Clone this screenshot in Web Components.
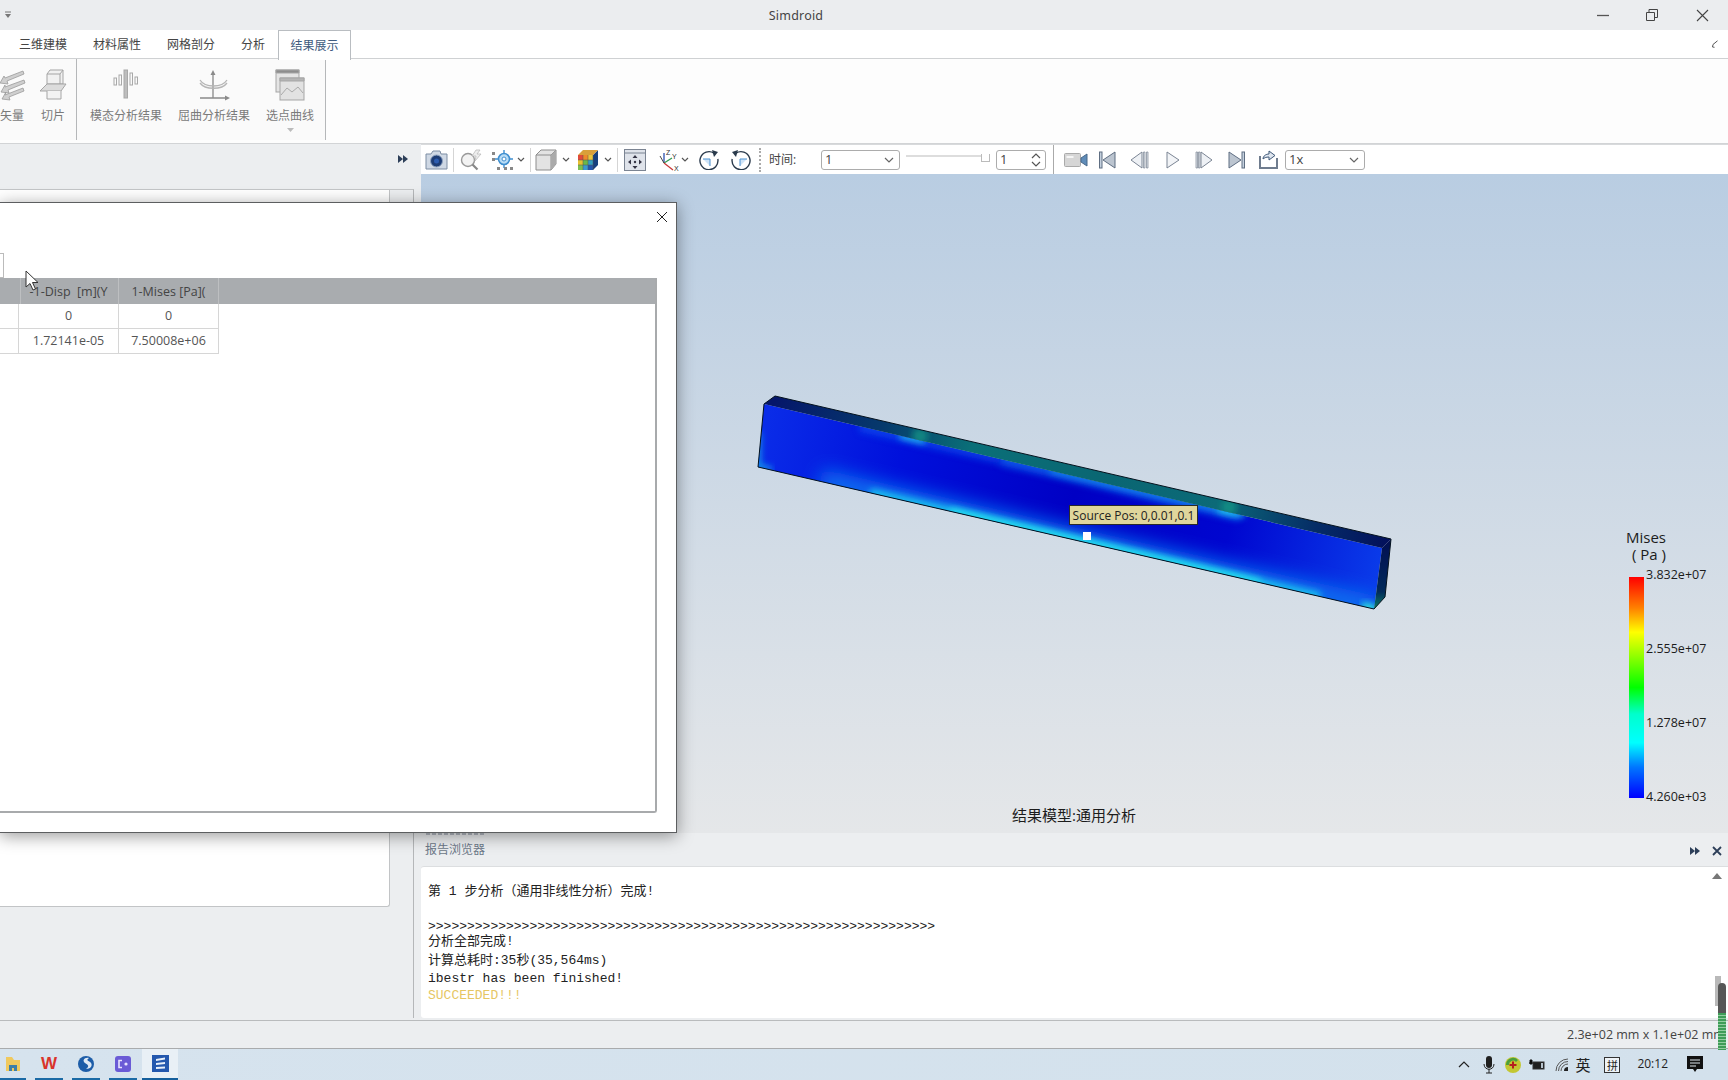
<!DOCTYPE html>
<html lang="zh">
<head>
<meta charset="utf-8">
<title>Simdroid</title>
<style>
  html, body { margin: 0; height: 100%; overflow: hidden; background: #eceef0; }
  body { font: 12px/1.4 "Open Sans", "Noto Sans CJK SC", sans-serif; }
</style>
</head>
<body>
<sim-app></sim-app>

<script>
const FONT = `"Open Sans", "Noto Sans CJK SC", sans-serif`;
const CHEV = `<svg width="8" height="6" viewBox="0 0 8 6"><path d="M1 1l3 3 3-3" fill="none" stroke="#555" stroke-width="1.2"/></svg>`;
const FFWD = `<svg width="12" height="10" viewBox="0 0 12 10"><path d="M1 1l5 4-5 4zM6 1l5 4-5 4z" fill="#2c3e58"/></svg>`;

// 主布局
class SimApp extends HTMLElement {
  constructor() {
    super();
    this.attachShadow({ mode: 'open' });
    this.shadowRoot.innerHTML = `
      <style>
        :host { display: flex; flex-direction: column; width: 1728px; height: 1080px; position: relative; overflow: hidden; font-family: ${FONT}; }
        .work { display: flex; height: 876px; }
        .right { display: flex; flex-direction: column; width: 1307px; }
        .cursor { position: absolute; left: 25px; top: 270px; }
        .meter { position: absolute; left: 1718px; top: 983px; width: 8px; height: 67px; border-radius: 4px 4px 0 0; background: linear-gradient(#565656 0 30px, transparent 30px), repeating-linear-gradient(#3f9d58 0 2px, #93cda0 2px 3px); }
      </style>
      <sim-titlebar></sim-titlebar>
      <sim-tabs></sim-tabs>
      <sim-ribbon></sim-ribbon>
      <div class="work">
        <sim-sidepanel></sim-sidepanel>
        <div class="right">
          <sim-toolbar></sim-toolbar>
          <sim-viewport></sim-viewport>
          <sim-report></sim-report>
        </div>
      </div>
      <sim-statusbar></sim-statusbar>
      <sim-taskbar></sim-taskbar>
      <sim-dialog></sim-dialog>
      <div class="meter"></div>
      <svg class="cursor" width="14" height="22" viewBox="0 0 14 22"><path d="M1 1v16l4-3.5 3 6.5 2.5-1-3-6.5h5.5z" fill="#fff" stroke="#333" stroke-width="1"/></svg>
    `;
  }
}

// 标题栏
class SimTitlebar extends HTMLElement {
  constructor() {
    super();
    this.attachShadow({ mode: 'open' });
    this.shadowRoot.innerHTML = `
      <style>
        :host { display: flex; align-items: center; height: 30px; background: #ebedef; color: #444; font-size: 13px; }
        .menu { width: 16px; padding-left: 4px; display: flex; }
        .title { flex: 1; text-align: center; margin-right: 11px; padding-top: 1px; font-family: "Noto Sans", sans-serif; font-size: 12.5px; letter-spacing: .2px; }
        .btns { display: flex; width: 140px; padding-right: 5px; align-items: center; }
      </style>
      <div class="menu"><svg width="8" height="8" viewBox="0 0 8 8"><path d="M1 1h6" stroke="#777"/><path d="M1 3l3 4 3-4z" fill="#777"/></svg></div>
      <div class="title">Simdroid</div>
      <div class="btns">
        <svg style="margin-left:14px" width="12" height="3" viewBox="0 0 12 3"><path d="M0 1.5h12" stroke="#555" stroke-width="1.3"/></svg>
        <svg style="margin-left:37px" width="12" height="12" viewBox="0 0 12 12"><path d="M.5 3.5h8v8h-8zM3 3.5V.5h8.5v8H8.5" fill="none" stroke="#444"/></svg>
        <svg style="margin-left:38px" width="13" height="13" viewBox="0 0 13 13"><path d="M1 1l11 11M12 1L1 12" stroke="#444" stroke-width="1.1"/></svg>
      </div>
    `;
  }
}

// 选项卡
class SimTabs extends HTMLElement {
  constructor() {
    super();
    this.attachShadow({ mode: 'open' });
    this.shadowRoot.innerHTML = `
      <style>
        :host { display: flex; height: 28px; background: #fff; border-bottom: 1px solid #cfd1d3; color: #444; font-size: 12px; position: relative; }
        .tab { display: flex; align-items: center; justify-content: center; padding-top: 2px; }
        .on { margin-left: 13px; width: 71px; height: 27px; border: 1px solid #b9bdc1; border-bottom: 0; background: #fff; color: #3f5c80; box-sizing: content-box; }
        .edit { margin-left: auto; margin-right: 9px; align-self: center; }
      </style>
      <div class="tab" style="margin-left:19px">三维建模</div>
      <div class="tab" style="margin-left:26px">材料属性</div>
      <div class="tab" style="margin-left:26px">网格剖分</div>
      <div class="tab" style="margin-left:26px">分析</div>
      <div class="tab on">结果展示</div>
      <svg class="edit" width="8" height="8" viewBox="0 0 8 8"><path d="M6.5 .8L2 4.5 1.5 7l2 .3" fill="none" stroke="#555"/></svg>
    `;
  }
}

// 功能区按钮
class RibbonBtn extends HTMLElement {
  constructor() {
    super();
    this.attachShadow({ mode: 'open' });
    this.shadowRoot.innerHTML = `
      <style>
        :host { display: flex; flex-direction: column; align-items: center; flex: none; color: #7a7a7a; font-size: 12px; }
        .icon { height: 36px; margin-top: 10px; display: flex; justify-content: center; }
        .label { margin-top: 2px; line-height: 18px; white-space: nowrap; }
        .more { height: 10px; display: flex; justify-content: center; margin-top: 3px; }
      </style>
      <div class="icon"><slot></slot></div>
      <div class="label"></div>
      <div class="more"></div>
    `;
  }
  connectedCallback() {
    this.shadowRoot.querySelector('.label').textContent = this.getAttribute('label');
    if (this.hasAttribute('more')) {
      this.shadowRoot.querySelector('.more').innerHTML = `<svg width="7" height="4" viewBox="0 0 7 4"><path d="M0 0h7L3.5 4z" fill="#bbb"/></svg>`;
    }
  }
}

// 功能区
class SimRibbon extends HTMLElement {
  constructor() {
    super();
    this.attachShadow({ mode: 'open' });
    this.shadowRoot.innerHTML = `
      <style>
        :host { display: flex; height: 84px; background: #fdfdfd; border-bottom: 1px solid #d2d4d6; box-sizing: content-box; }
        .group { display: flex; height: 81px; background: #fafafa; border-right: 1px solid #b5b7b9; overflow: hidden; box-sizing: border-box; }
        .g1 { width: 77px; justify-content: flex-end; padding-right: 8px; gap: 11px; }
        .g2 { width: 249px; padding-left: 13px; gap: 16px; }
      </style>
      <div class="group g1">
        <ribbon-btn label="矢量">
          <svg width="30" height="32" viewBox="0 0 30 32" fill="#cfcfcf" stroke="#9a9a9a" stroke-width=".8"><path d="M8 9l18-7 1 3L10 12l1 3-8-1 4-7zM8 18l19-7 1 3-17 7 1 3-8-1 4-7zM8 26l18-7 1 3-15 6 1 3-8-1 4-7z"/></svg>
        </ribbon-btn>
        <ribbon-btn label="切片">
          <svg width="30" height="32" viewBox="0 0 30 32" fill="none" stroke="#a5a5a5"><path d="M9 5l3-4h13v14H9z" fill="#f1f1f1"/><path d="M9 5h13l3-4M22 5v10" /><path d="M9 15L2 22h21l5-7z" fill="#dcdcdc"/><path d="M9 22v8h14v-8" fill="#f3f3f3"/></svg>
        </ribbon-btn>
      </div>
      <div class="group g2">
        <ribbon-btn label="模态分析结果">
          <svg width="30" height="32" viewBox="0 0 30 32" fill="none" stroke="#a8a8a8"><rect x="13" y="1" width="3.5" height="28" fill="#bdbdbd"/><rect x="8" y="6" width="2.5" height="10"/><rect x="19" y="4" width="2.5" height="12"/><rect x="3" y="9" width="2.5" height="7"/><rect x="24" y="8" width="2.5" height="7"/></svg>
        </ribbon-btn>
        <ribbon-btn label="屈曲分析结果">
          <svg width="32" height="32" viewBox="0 0 32 32" fill="none" stroke="#8a8a8a" stroke-width="1.3"><path d="M15 3v26M2 29h26"/><path d="M15 1l-2.5 5h5zM32 29l-5-2.5v5z" fill="#8a8a8a" stroke="none"/><path d="M2 11c5 8 22 8 27 0M2 14c5 7 22 7 27 0" stroke="#b5b5b5"/></svg>
        </ribbon-btn>
        <ribbon-btn label="选点曲线" more>
          <svg width="30" height="32" viewBox="0 0 30 32" fill="#e4e4e4" stroke="#a5a5a5"><rect x="1" y="1" width="23" height="22"/><path d="M1 1h23v3H1z" fill="#8d8d8d"/><rect x="5" y="9" width="24" height="22" fill="#e2e2e2"/><path d="M5 9h24v3H5z" fill="#b5b5b5"/><path d="M6 26l6-7 5 4 6-5 5 6" fill="none" stroke="#aaa"/></svg>
        </ribbon-btn>
      </div>
    `;
  }
}

// 左侧面板
class SimSidepanel extends HTMLElement {
  constructor() {
    super();
    this.attachShadow({ mode: 'open' });
    this.shadowRoot.innerHTML = `
      <style>
        :host { display: flex; flex-direction: column; width: 421px; flex: none; background: #eceef0; }
        .head { height: 30px; display: flex; align-items: center; justify-content: flex-end; padding-right: 12px; }
        .box { margin: 15px 7px 2px 0; flex: 1; border-top: 1px solid #c4c6c8; border-right: 1px solid #b5b7b9; }
        .inner { width: 389px; height: 716px; background: #fff; border: solid #c2c4c6; border-width: 0 1px 1px 0; border-radius: 0 0 3px 0; }
      </style>
      <div class="head">${FFWD}</div>
      <div class="box"><div class="inner"></div></div>
    `;
  }
}

// 工具栏下拉框
class TbSelect extends HTMLElement {
  constructor() {
    super();
    this.attachShadow({ mode: 'open' });
    this.shadowRoot.innerHTML = `
      <style>
        :host { display: flex; align-items: center; justify-content: space-between; height: 20px; box-sizing: border-box; border: 1px solid #acacac; border-radius: 3px; padding: 0 5px 0 3px; background: #fff; color: #444; font-size: 13px; }
      </style>
      <span><slot></slot></span>
      <svg width="10" height="6" viewBox="0 0 10 6"><path d="M1 1l4 4 4-4" fill="none" stroke="#666" stroke-width="1.2"/></svg>
    `;
  }
}

// 工具栏
class SimToolbar extends HTMLElement {
  constructor() {
    super();
    this.attachShadow({ mode: 'open' });
    this.shadowRoot.innerHTML = `
      <style>
        :host { display: flex; align-items: center; height: 30px; box-sizing: border-box; background: #fff; border-top: 1px solid #d8dadc; color: #444; font-size: 12px; }
        svg, .sep, tb-select, .spin, .slider, .lbl { flex: none; }
        .sep { width: 1px; height: 24px; background: #d5d5d5; }
        .sep.b { height: 29px; background: #aaa; }
        .dot { width: 0; height: 24px; border-left: 2px dotted #aaa; }
        .lbl { width: 30px; white-space: nowrap; padding-top: 2px; }
        .slider { width: 84px; height: 20px; position: relative; }
        .slider .line { position: absolute; left: 0; right: 5px; top: 5px; height: 2px; border: 1px solid #ddd; box-sizing: border-box; background: #f6f6f6; }
        .slider .thumb { position: absolute; right: 0; top: 4px; width: 9px; height: 8px; border: 1px solid #bbb; border-top: 0; background: #fff; box-sizing: border-box; }
        .spin { width: 50px; height: 20px; box-sizing: border-box; border: 1px solid #acacac; border-radius: 3px; display: flex; align-items: center; justify-content: space-between; padding: 0 4px 0 3px; font-size: 13px; }
        .spin svg { display: block; }
      </style>
      <svg style="margin-left:4px" width="23" height="20" viewBox="0 0 23 20"><path d="M1 4h5l2-3h7l1 3h6v15H1z" fill="#cfd8e4" stroke="#7d8da3"/><circle cx="11.5" cy="11" r="6" fill="#1d3c74" stroke="#8fa3bf"/><circle cx="11.5" cy="11" r="2.5" fill="#2c5cb0"/></svg>
      <div class="sep" style="margin-left:5px"></div>
      <svg style="margin-left:6px" width="22" height="22" viewBox="0 0 22 22"><circle cx="8" cy="11" r="6.5" fill="#f3f3f3" stroke="#999" stroke-width="1.4"/><path d="M12.5 15.5l5 5" stroke="#888" stroke-width="2.2"/><path d="M16 1l-4 6h4l-1 5 6-7h-4l3-4z" fill="#eee" stroke="#bbb" stroke-width=".8"/></svg>
      <svg style="margin-left:9px" width="24" height="22" viewBox="0 0 24 22"><circle cx="13" cy="10" r="5.5" fill="#b9dcf5" stroke="#3f8fd0" stroke-width="1.6"/><circle cx="13" cy="10" r="2" fill="#fff" stroke="#3f8fd0"/><path d="M13 1v4M13 15v4M4 10h4M18 10h4" stroke="#3f8fd0" stroke-width="1.4"/><g fill="#888"><rect x="1" y="3" width="3" height="3"/><rect x="1" y="9" width="3" height="3"/><rect x="6" y="18" width="3" height="3"/><rect x="13" y="18" width="3" height="3"/><rect x="19" y="18" width="3" height="3"/></g></svg>
      <span style="margin-left:2px;display:flex">${CHEV}</span>
      <div class="sep" style="margin-left:5px"></div>
      <svg style="margin-left:4px" width="22" height="22" viewBox="0 0 22 22"><path d="M1 6l5-5h15v14l-5 6H1z" fill="#e3e3e3" stroke="#8d8d8d"/><path d="M16 6h-15M16 6l5-5M16 6v15" fill="none" stroke="#8d8d8d"/><path d="M16 6l5-5v14l-5 6z" fill="#aaa"/></svg>
      <span style="margin-left:5px;display:flex">${CHEV}</span>
      <svg style="margin-left:7px" width="22" height="22" viewBox="0 0 22 22"><path d="M1 6h5v5H1z" fill="#e24a3a"/><path d="M6 6h5v5H6z" fill="#ee8a2a"/><path d="M11 6h5v5h-5z" fill="#e9c53a"/><path d="M1 11h5v5H1z" fill="#e8c030"/><path d="M6 11h5v5H6z" fill="#6ab84a"/><path d="M11 11h5v5h-5z" fill="#33a0c0"/><path d="M1 16h5v5H1z" fill="#7cc050"/><path d="M6 16h5v5H6z" fill="#3a9ad0"/><path d="M11 16h5v5h-5z" fill="#2255b0"/><path d="M16 6l5-5v15l-5 5z" fill="#16407e"/><path d="M1 6l5-5h15l-5 5z" fill="#d9a03a"/><path d="M6 6v15M11 6v15M1 11h15M1 16h15M16 6v15" stroke="#555" stroke-width=".5"/></svg>
      <span style="margin-left:5px;display:flex">${CHEV}</span>
      <div class="sep" style="margin-left:5px"></div>
      <svg style="margin-left:6px" width="22" height="22" viewBox="0 0 22 22"><rect x=".5" y=".5" width="21" height="21" fill="#dfe3ea" stroke="#7b8492"/><path d="M.5 4h21" stroke="#7b8492"/><path d="M11 6l-2.5 3h5zM11 20l-2.5-3h5zM4 13l3-2.5v5zM18 13l-3-2.5v5z" fill="#334"/><circle cx="11" cy="13" r="1.2" fill="#334"/></svg>
      <svg style="margin-left:11px" width="23" height="24" viewBox="0 0 23 24"><path d="M7 15V5" stroke="#2c50b0" stroke-width="1.3"/><path d="M7 15l8-5" stroke="#2f9a55" stroke-width="1.3"/><path d="M7 15l9 7" stroke="#c83a3a" stroke-width="1.3"/><path d="M7 15L3 8" stroke="#444"/><g font-family="Liberation Sans" font-size="7" fill="#333"><text x="9" y="7">Z</text><text x="15" y="11">Y</text><text x="17" y="23">X</text></g></svg>
      <span style="margin-left:1px;display:flex">${CHEV}</span>
      <svg style="margin-left:10px" width="20" height="20" viewBox="0 0 20 20"><path d="M15 3.2A9 9 0 1 0 18.8 9" fill="none" stroke="#2a3a4c" stroke-width="1.4"/><path d="M13 0l6 2-4 5z" fill="#2a3a4c"/><path d="M4 9h7v7" fill="#cfe4f8" stroke="#4a90d0"/></svg>
      <svg style="margin-left:12px" width="20" height="20" viewBox="0 0 20 20"><path d="M5 3.2A9 9 0 1 1 1.2 9" fill="none" stroke="#2a3a4c" stroke-width="1.4"/><path d="M7 0L1 2l4 5z" fill="#2a3a4c"/><path d="M16 9H9v7" fill="#cfe4f8" stroke="#4a90d0"/></svg>
      <div class="dot" style="margin-left:8px"></div>
      <div class="lbl" style="margin-left:8px">时间:</div>
      <tb-select style="margin-left:22px;width:79px">1</tb-select>
      <div class="slider" style="margin-left:6px"><div class="line"></div><div class="thumb"></div></div>
      <div class="spin" style="margin-left:6px"><span>1</span>
        <svg width="10" height="16" viewBox="0 0 10 16"><path d="M1 6l4-4 4 4M1 10l4 4 4-4" fill="none" stroke="#555" stroke-width="1.2"/></svg>
      </div>
      <div class="sep b" style="margin-left:7px"></div>
      <svg style="margin-left:10px" width="24" height="14" viewBox="0 0 24 14"><rect x=".5" y=".5" width="16" height="13" rx="1" fill="#d6d6d6" stroke="#aaa"/><rect x="2.5" y="3" width="7" height="2" fill="#f5f5f5"/><path d="M17 5l6-4v12l-6-4z" fill="#5f8cb8" stroke="#49698a"/></svg>
      <svg style="margin-left:11px" width="17" height="18" viewBox="0 0 17 18"><rect x=".5" y="1" width="2.5" height="16" fill="#c4d0de" stroke="#5f6e82"/><path d="M16 1v16L4 9z" fill="#bcc5d0" stroke="#5f6e82"/></svg>
      <svg style="margin-left:14px" width="19" height="18" viewBox="0 0 19 18"><path d="M12 1v16L1 9z" fill="#eef1f5" stroke="#7b8594"/><path d="M13.5 1h1.5v16h-1.5zM16.5 1H18v16h-1.5z" fill="#dde3ea" stroke="#7b8594" stroke-width=".7"/></svg>
      <svg style="margin-left:17px" width="14" height="18" viewBox="0 0 14 18"><path d="M1 1v16l12-8z" fill="#f2f4f7" stroke="#7b8594"/></svg>
      <svg style="margin-left:15px" width="18" height="18" viewBox="0 0 18 18"><path d="M6 1v16l11-8z" fill="#eef1f5" stroke="#7b8594"/><path d="M1 1h1.5v16H1zM3.5 1H5v16H3.5z" fill="#dde3ea" stroke="#7b8594" stroke-width=".7"/></svg>
      <svg style="margin-left:15px" width="17" height="18" viewBox="0 0 17 18"><path d="M1 1v16l12-8z" fill="#bcc5d0" stroke="#5f6e82"/><rect x="14" y="1" width="2.5" height="16" fill="#c4d0de" stroke="#5f6e82"/></svg>
      <svg style="margin-left:14px" width="19" height="19" viewBox="0 0 19 19"><path d="M1 6v12h17V8" fill="none" stroke="#6f7c8e" stroke-width="2"/><path d="M4 9c0-3 3-5 6-5V1l6 4.5L10 10V7c-3 0-5 1-6 2z" fill="#dfe6ef" stroke="#3f5878"/></svg>
      <tb-select style="margin-left:7px;width:80px">1x</tb-select>
    `;
  }
}

// 三维视图
class SimViewport extends HTMLElement {
  constructor() {
    super();
    this.attachShadow({ mode: 'open' });
    this.shadowRoot.innerHTML = `
      <style>
        :host { display: block; position: relative; height: 659px; background: linear-gradient(#b9cde2, #e5e7e9); overflow: hidden; color: #1c1c1c; }
        svg.model { position: absolute; left: 0; top: 0; }
        .tip { position: absolute; left: 648px; top: 331px; width: 129px; height: 20px; box-sizing: border-box; border: 1px solid #2a2a2a; background: #e0d69c; font-size: 12px; line-height: 19px; color: #222; text-align: center; white-space: nowrap; }
        .mark { position: absolute; left: 662px; top: 358px; width: 8px; height: 8px; background: #fff; }
        .caption { position: absolute; left: 583px; top: 631px; width: 140px; text-align: center; font-size: 15px; line-height: 20px; white-space: nowrap; }
        .legend { position: absolute; left: 1206px; top: 355px; width: 100px; }
        .title { font-size: 15px; line-height: 17px; margin-left: -1px; }
        .title div:last-child { margin-left: 6px; }
        .bar { position: absolute; left: 2px; top: 48px; width: 15px; height: 221px; background: linear-gradient(#f00, #ff8000 14%, #ff0 25%, #0f0 50%, #0fc 62%, #0ff 75%, #07f 86%, #00f 100%); }
        .tick { position: absolute; left: 19px; font-size: 12.5px; line-height: 16px; margin-top: 1px; }
      </style>
      <svg class="model" width="1307" height="659" viewBox="421 174 1307 659">
        <defs>
          <clipPath id="front"><polygon points="764,404 1382,548 1374,609 758,467"/></clipPath>
          <clipPath id="top"><polygon points="775,396 1391,539 1382,548 764,404"/></clipPath>
          <filter id="b4" x="-20%" y="-200%" width="140%" height="500%"><feGaussianBlur stdDeviation="3.5"/></filter>
          <filter id="b10" x="-20%" y="-200%" width="140%" height="500%"><feGaussianBlur stdDeviation="9"/></filter>
          <linearGradient id="tg" gradientUnits="userSpaceOnUse" x1="775" y1="396" x2="1391" y2="539">
            <stop offset="0" stop-color="#05166a"/><stop offset=".18" stop-color="#063a6c"/><stop offset=".32" stop-color="#0a6f78"/>
            <stop offset=".55" stop-color="#0a6672"/><stop offset=".72" stop-color="#0c6a78"/><stop offset=".88" stop-color="#052c66"/><stop offset="1" stop-color="#03105c"/>
          </linearGradient>
          <linearGradient id="sg" x1="0" y1="0" x2="0" y2="1"><stop offset="0" stop-color="#020e52"/><stop offset=".75" stop-color="#022a5a"/><stop offset="1" stop-color="#0d7d62"/></linearGradient>
          <linearGradient id="fg" gradientUnits="userSpaceOnUse" x1="764" y1="430" x2="1380" y2="580">
            <stop offset="0" stop-color="#0a2ce8"/><stop offset=".22" stop-color="#0010dc"/><stop offset=".5" stop-color="#0000c4"/><stop offset=".75" stop-color="#0006d0"/><stop offset="1" stop-color="#0a3cea"/>
          </linearGradient>
        </defs>
        <polygon points="764,404 1382,548 1374,609 758,467" fill="url(#fg)"/>
        <g clip-path="url(#front)">
          <path d="M1000 458L1240 514" stroke="#0a66ee" stroke-width="14" fill="none" filter="url(#b4)" opacity=".8"/>
          <path d="M1050 470L1235 512" stroke="#18b0ee" stroke-width="5" fill="none" filter="url(#b4)" opacity=".7"/>
          <path d="M860 426L1000 458" stroke="#0a50ee" stroke-width="12" fill="none" filter="url(#b4)" opacity=".7"/>
          <path d="M900 435L925 441" stroke="#24e0ee" stroke-width="5" fill="none" filter="url(#b4)"/>
          <path d="M1218 509L1244 515" stroke="#24e0ee" stroke-width="5" fill="none" filter="url(#b4)"/>
          <path d="M820 482L1374 609" stroke="#0a6cf0" stroke-width="26" fill="none" filter="url(#b10)"/>
          <path d="M870 493L1320 597" stroke="#1cc4ee" stroke-width="9" fill="none" filter="url(#b4)"/>
          <path d="M950 511L1260 583" stroke="#28e4ee" stroke-width="6" fill="none" filter="url(#b4)"/>
          <path d="M758 432V467L772 470" stroke="#1cc8e8" stroke-width="4" fill="none" filter="url(#b4)"/>
          <path d="M1362 606L1376 610" stroke="#30e8d8" stroke-width="9" fill="none" filter="url(#b4)"/>
        </g>
        <polygon points="775,396 1391,539 1382,548 764,404" fill="url(#tg)"/>
        <g clip-path="url(#top)">
          <circle cx="920" cy="436" r="8" fill="#17a08a" filter="url(#b4)" opacity=".7"/>
          <circle cx="1229" cy="507" r="8" fill="#17a08a" filter="url(#b4)" opacity=".7"/>
        </g>
        <polygon points="1382,548 1391,539 1385,597 1374,609" fill="url(#sg)"/>
        <path d="M758 467L1374 609L1385 597L1391 539L775 396L764 404L758 467" fill="none" stroke="#04121e" stroke-width="1"/>
      </svg>
      <div class="tip">Source Pos: 0,0.01,0.1</div>
      <div class="mark"></div>
      <div class="caption">结果模型:通用分析</div>
      <div class="legend">
        <div class="title"><div>Mises</div><div>( Pa )</div></div>
        <div class="bar"></div>
        <div class="tick" style="top:37px">3.832e+07</div>
        <div class="tick" style="top:111px">2.555e+07</div>
        <div class="tick" style="top:185px">1.278e+07</div>
        <div class="tick" style="top:259px">4.260e+03</div>
      </div>
    `;
  }
}

// 报告浏览器
class SimReport extends HTMLElement {
  constructor() {
    super();
    this.attachShadow({ mode: 'open' });
    this.shadowRoot.innerHTML = `
      <style>
        :host { display: flex; flex-direction: column; height: 187px; background: #eceef0; }
        .sliver { height: 2px; width: 58px; margin-left: 5px; background: repeating-linear-gradient(90deg, #b4bac2 0 4px, transparent 4px 6px); }
        .head { height: 31px; display: flex; align-items: center; padding: 0 6px 0 4px; box-sizing: border-box; color: #6c7888; font-size: 12px; }
        .head span { flex: 1; }
        .head svg { margin-left: 11px; }
        .body { flex: 1; margin-bottom: 2px; background: #fff; border-top: 1px solid #dcdee0; border-radius: 3px 0 0 3px; position: relative; box-sizing: border-box; padding: 16px 0 0 7px; overflow: hidden; font: 13px/17px "Liberation Mono", "Noto Sans CJK SC", monospace; color: #222; white-space: pre; }
        .ok { color: #e6c663; }
        .up { position: absolute; right: 6px; top: 6px; }
        .thumb { position: absolute; right: 7px; top: 109px; width: 6px; height: 30px; background: #b9b9b9; }
      </style>
      <div class="sliver"></div>
      <div class="head"><span>报告浏览器</span>${FFWD}
        <svg width="10" height="10" viewBox="0 0 10 10"><path d="M1 1l8 8M9 1L1 9" stroke="#2c3e58" stroke-width="1.8"/></svg>
      </div>
      <div class="body"><div>第 1 步分析（通用非线性分析）完成!</div><div> </div><div id="arrows" style="margin-top:1px"></div><div style="margin-top:-2px">分析全部完成!</div><div style="margin-top:2px">计算总耗时:35秒(35,564ms)</div><div style="margin-top:1px">ibestr has been finished!</div><div class="ok">SUCCEEDED!!!</div>
        <svg class="up" width="10" height="6" viewBox="0 0 10 6"><path d="M5 0l5 6H0z" fill="#777"/></svg>
        <div class="thumb"></div>
      </div>
    `;
    this.shadowRoot.getElementById('arrows').textContent = '>'.repeat(65);
  }
}

// 状态栏
class SimStatusbar extends HTMLElement {
  constructor() {
    super();
    this.attachShadow({ mode: 'open' });
    this.shadowRoot.innerHTML = `
      <style>
        :host { display: flex; height: 29px; box-sizing: border-box; background: #eceef0; border-top: 1px solid #b9bbbd; border-bottom: 1px solid #a9abad; align-items: center; color: #444; font-size: 12.5px; overflow: hidden; padding-left: 1567px; white-space: nowrap; }
      </style>
      <div>2.3e+02 mm x 1.1e+02 mm</div>
    `;
  }
}

// 任务栏
class SimTaskbar extends HTMLElement {
  constructor() {
    super();
    this.attachShadow({ mode: 'open' });
    this.shadowRoot.innerHTML = `
      <style>
        :host { display: flex; height: 31px; background: linear-gradient(90deg, #d6e3ee, #d3e1ec); color: #222; }
        .apps { display: flex; }
        .app { height: 31px; box-sizing: border-box; border-bottom: 2px solid #1b6aa5; display: flex; align-items: center; justify-content: center; margin-right: 9px; }
        .app.on { background: #e9f0f6; border-bottom-color: #155f9c; margin-right: 0; }
        .tray { margin-left: auto; display: flex; align-items: center; padding-right: 25px; }
        .wps { font: bold 17px "Liberation Sans", sans-serif; color: #d9342b; }
        .ying { font: 15px "Noto Sans CJK SC", sans-serif; }
        .pin { width: 16px; height: 16px; box-sizing: border-box; border: 1px solid #333; background: #eef3f7; font: 11px/14px "Noto Sans CJK SC", sans-serif; text-align: center; }
        .time { font-size: 12px; }
      </style>
      <div class="apps">
        <div class="app" style="width:26px"><svg width="18" height="16" viewBox="0 0 18 16"><path d="M2 4V1h6l2 3h6v11H2z" fill="#f0c95e"/><path d="M5 15V9h8v6h-3v-3H8v3z" fill="#3d7fa8"/></svg></div>
        <div class="app" style="width:28px"><span class="wps">W</span></div>
        <div class="app" style="width:28px"><svg width="18" height="18" viewBox="0 0 18 18"><circle cx="9" cy="9" r="8" fill="#1d5da8"/><path d="M12 3c-5-1-7 3-4 5s5 3 1 6c4 0 7-3 5-6s-6-2-2-5z" fill="#dfe9f4"/></svg></div>
        <div class="app" style="width:28px;margin-right:5px"><svg width="18" height="18" viewBox="0 0 18 18"><rect x="1" y="1" width="16" height="16" rx="3" fill="#6a5bd6"/><path d="M8 5.5H5v7h3" fill="none" stroke="#e8e4ff" stroke-width="1.6"/><circle cx="12" cy="9" r="1.6" fill="#e8e4ff"/></svg></div>
        <div class="app on" style="width:36px"><svg width="17" height="17" viewBox="0 0 17 17"><rect width="17" height="17" fill="#2458ae"/><path d="M4 4l9-1.5v2L4 6zM4 8l9-1v2l-9 1zM4 12l9-.5v2L4 14z" fill="#e8f0fa"/></svg></div>
      </div>
      <div class="tray">
        <svg width="12" height="7" viewBox="0 0 12 7"><path d="M1 6l5-5 5 5" fill="none" stroke="#222" stroke-width="1.2"/></svg>
        <svg style="margin-left:13px" width="12" height="18" viewBox="0 0 12 18"><rect x="3" y="0" width="6" height="12" rx="3" fill="#1f1f1f"/><path d="M1 8c0 7 10 7 10 0M6 13v4M3 17h6" fill="none" stroke="#222"/></svg>
        <svg style="margin-left:10px" width="16" height="16" viewBox="0 0 16 16"><circle cx="8" cy="8" r="8" fill="#c3c732"/><path d="M1 8a7 7 0 0 1 12-5l-2 2a4 4 0 0 0-7 3z" fill="#4b9f3c"/><path d="M8 4.5v7M4.5 8h7" stroke="#b51f1f" stroke-width="2"/></svg>
        <svg style="margin-left:8px" width="16" height="12" viewBox="0 0 16 12"><path d="M1 1v4h2V1zM0 4h4" stroke="#111"/><rect x="4" y="3" width="11" height="7" fill="#1f1f1f" stroke="#333"/><rect x="12" y="4" width="2" height="5" fill="#b6c2cc"/></svg>
        <svg style="margin-left:10px" width="14" height="14" viewBox="0 0 14 14"><g fill="none" stroke="#555"><path d="M1 13A12 12 0 0 1 13 1M3.5 13a9.5 9.5 0 0 1 9.5-9.5M6 13a7 7 0 0 1 7-7"/></g><path d="M9 13a4 4 0 0 1 4-4v4z" fill="#222"/></svg>
        <span class="ying" style="margin-left:6px">英</span>
        <span class="pin" style="margin-left:14px">拼</span>
        <span class="time" style="margin-left:17px">20:12</span>
        <svg style="margin-left:19px" width="16" height="17" viewBox="0 0 16 17"><path d="M0 0h16v13H10l-2 3-2-3H0z" fill="#111"/><path d="M3 4h10M3 7h10M3 10h6" stroke="#dfe8ef"/></svg>
      </div>
    `;
  }
}

// 结果表格
class SimTable extends HTMLElement {
  constructor() {
    super();
    this.attachShadow({ mode: 'open' });
    this.shadowRoot.innerHTML = `
      <style>
        :host { display: block; width: 657px; height: 535px; box-sizing: border-box; border: solid #a8aaac; border-width: 0 2px 2px 0; border-radius: 0 0 3px 0; background: #fff; color: #555; font-size: 12.5px; }
        .head { display: grid; grid-template-columns: 19px 100px 100px; height: 26px; background: #a9acaf; }
        .row { display: grid; grid-template-columns: 19px 100px 100px; width: 219px; height: 25px; box-sizing: border-box; border-bottom: 1px solid #d6d6d6; }
        .head div { border-right: 1px solid #bdbfc1; padding: 0 10px; overflow: hidden; white-space: pre; line-height: 27px; color: #444; text-align: center; }
        .row div { border-right: 1px solid #d6d6d6; line-height: 24px; text-align: center; }
      </style>
      <div class="head"><div></div><div>-1-Disp  [m](Y</div><div>1-Mises [Pa](</div></div>
      <div class="row"><div></div><div>0</div><div>0</div></div>
      <div class="row"><div></div><div>1.72141e-05</div><div>7.50008e+06</div></div>
    `;
  }
}

// 结果对话框
class SimDialog extends HTMLElement {
  constructor() {
    super();
    this.attachShadow({ mode: 'open' });
    this.shadowRoot.innerHTML = `
      <style>
        :host { display: block; position: absolute; left: 0; top: 202px; width: 677px; height: 631px; box-sizing: border-box; background: #fff; border: 1px solid #5c5e60; border-left: 0; box-shadow: 0 3px 16px rgba(0,0,0,.4); }
        .head { height: 50px; display: flex; justify-content: flex-end; padding: 8px 8px 0 0; box-sizing: border-box; }
        .input { width: 4px; height: 25px; box-sizing: border-box; border: 1px solid #bbb; border-left: 0; }
      </style>
      <div class="head"><svg width="12" height="12" viewBox="0 0 12 12"><path d="M1 1l10 10M11 1L1 11" stroke="#222" stroke-width="1"/></svg></div>
      <div class="input"></div>
      <sim-table></sim-table>
    `;
  }
}

customElements.define('ribbon-btn', RibbonBtn);
customElements.define('tb-select', TbSelect);
customElements.define('sim-titlebar', SimTitlebar);
customElements.define('sim-tabs', SimTabs);
customElements.define('sim-ribbon', SimRibbon);
customElements.define('sim-sidepanel', SimSidepanel);
customElements.define('sim-toolbar', SimToolbar);
customElements.define('sim-viewport', SimViewport);
customElements.define('sim-report', SimReport);
customElements.define('sim-statusbar', SimStatusbar);
customElements.define('sim-taskbar', SimTaskbar);
customElements.define('sim-table', SimTable);
customElements.define('sim-dialog', SimDialog);
customElements.define('sim-app', SimApp);
</script>
</body>
</html>
